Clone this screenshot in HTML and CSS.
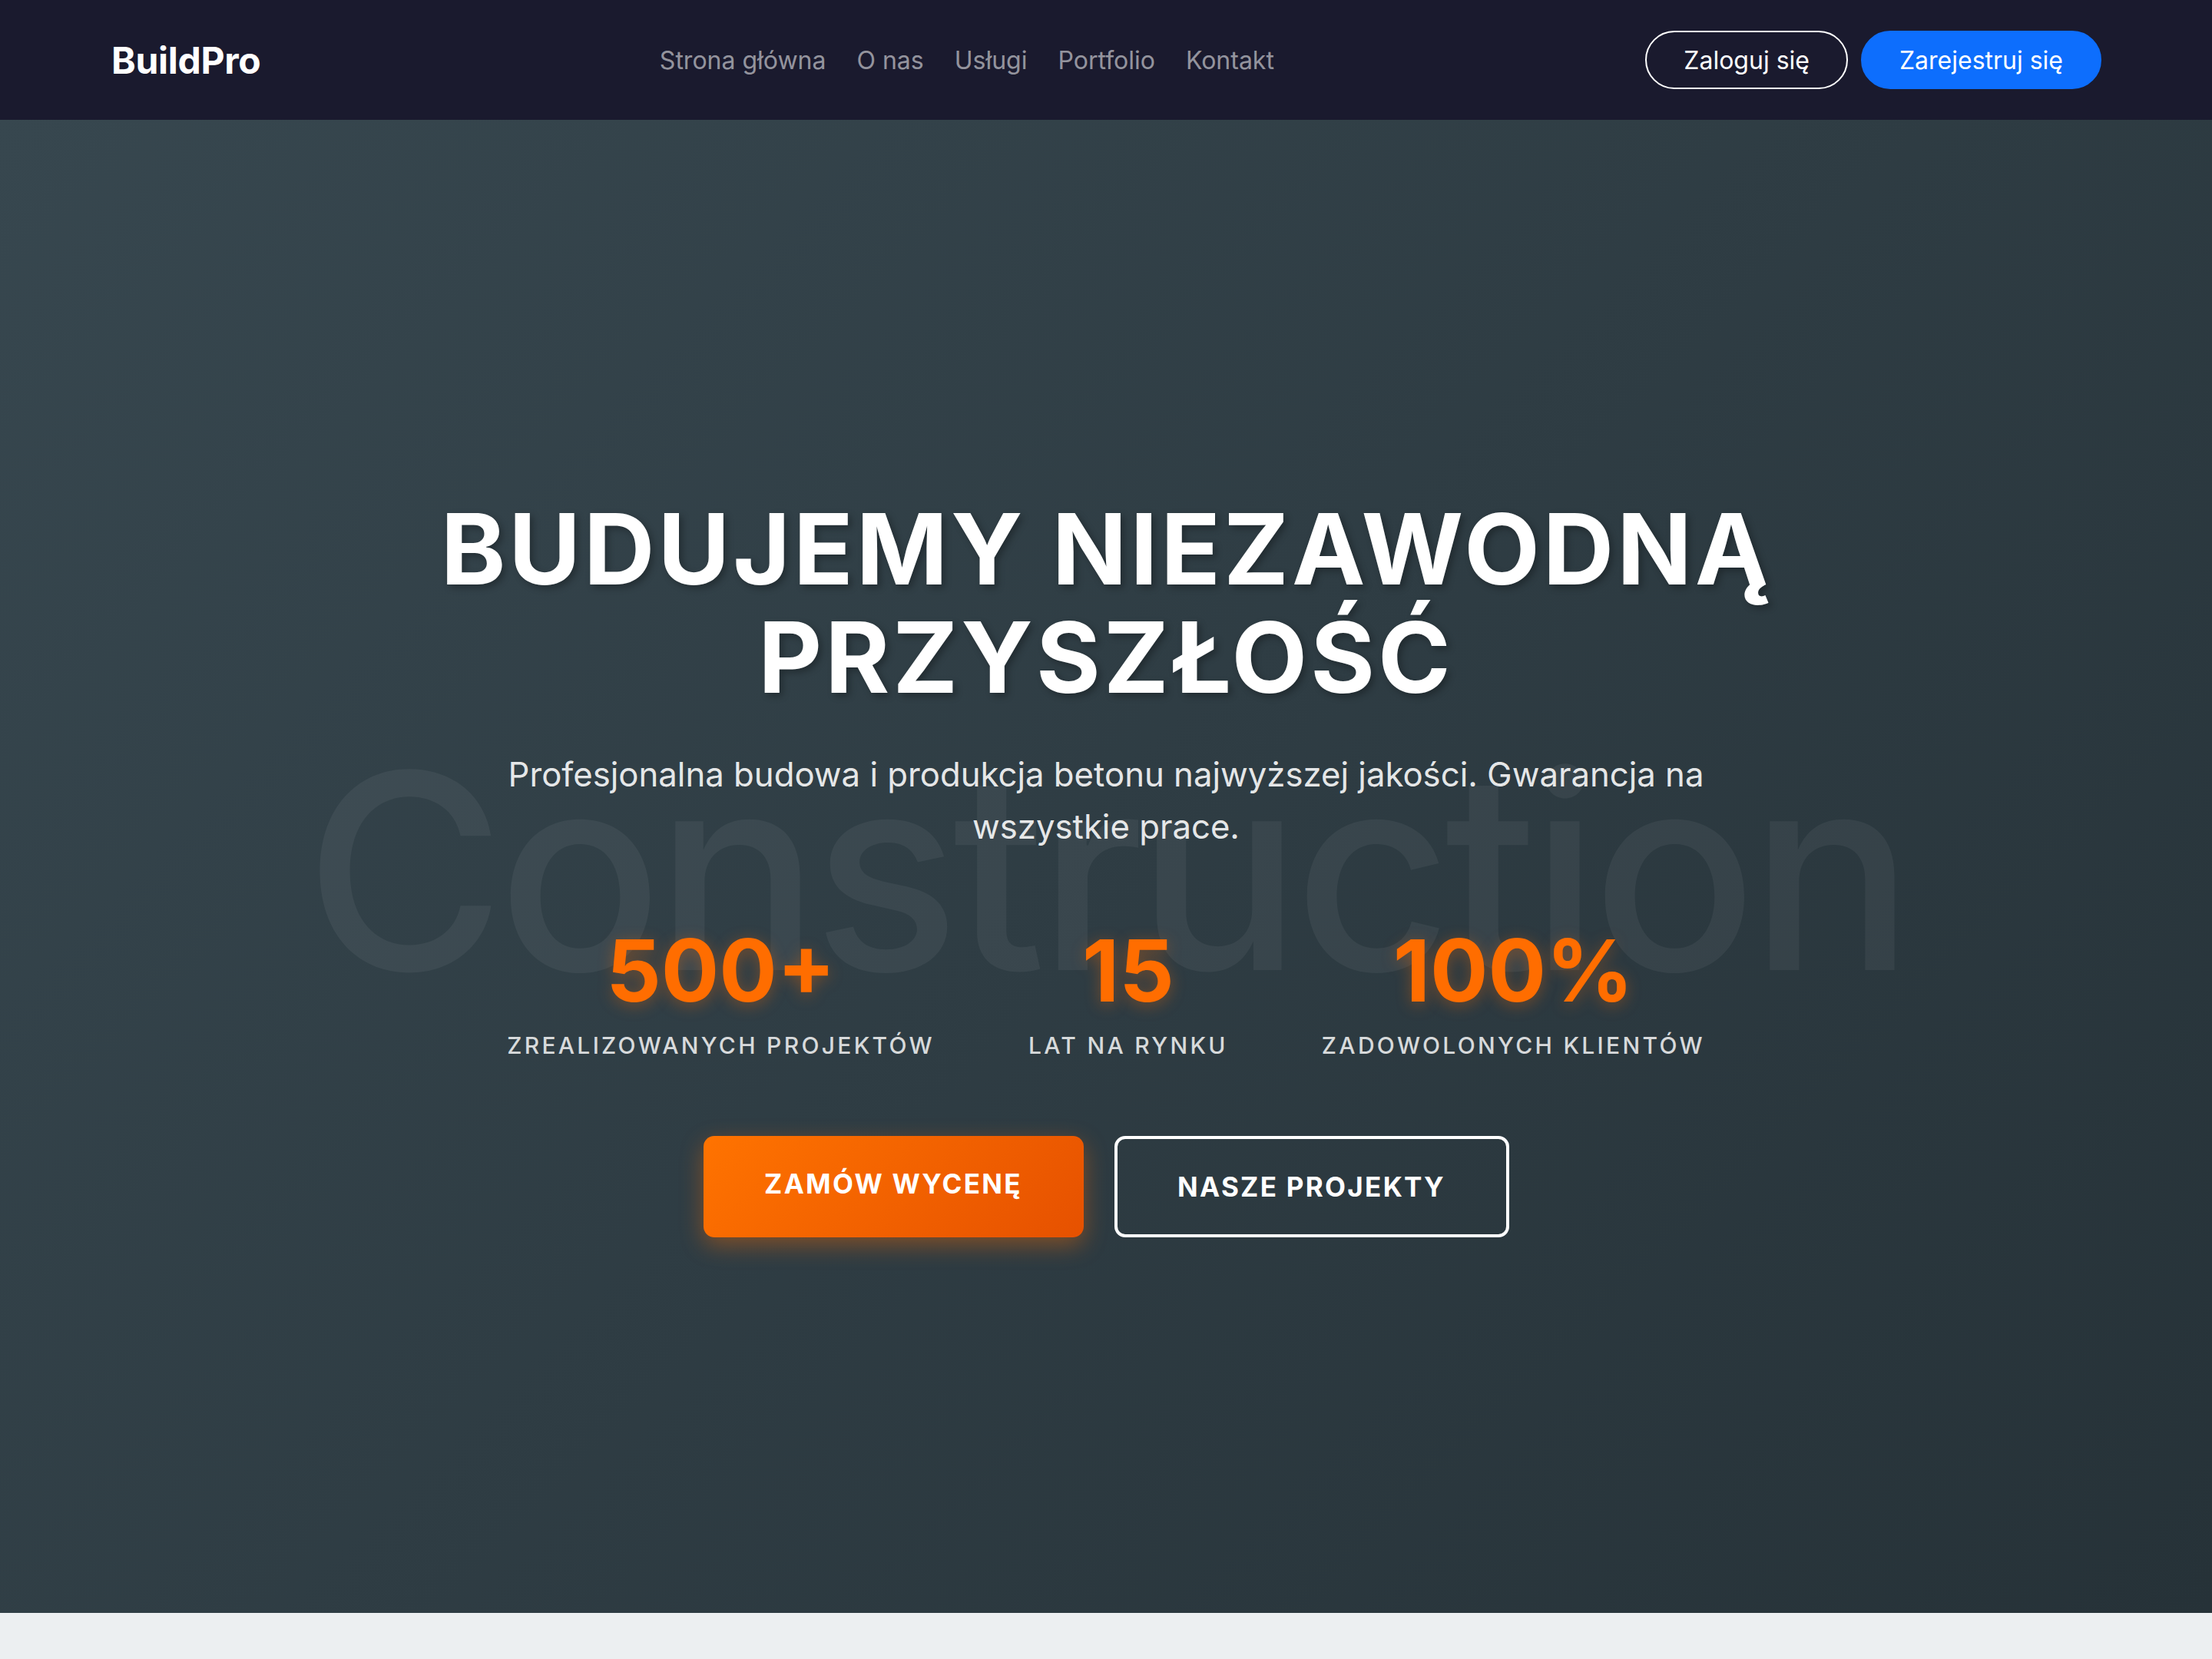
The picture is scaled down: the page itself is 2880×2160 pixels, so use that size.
FILE: index.html
```html
<!DOCTYPE html>
<html lang="pl">
<head>
<meta charset="utf-8">
<title>BuildPro</title>
<link rel="stylesheet" href="styles.css">
</head>
<body>
<nav class="navbar">
  <a class="brand" href="#">BuildPro</a>
  <ul class="nav-links">
    <li><a href="#">Strona główna</a></li>
    <li><a href="#">O nas</a></li>
    <li><a href="#">Usługi</a></li>
    <li><a href="#">Portfolio</a></li>
    <li><a href="#">Kontakt</a></li>
  </ul>
  <div class="auth">
    <a class="btn-pill btn-outline" href="#">Zaloguj się</a>
    <a class="btn-pill btn-primary" href="#">Zarejestruj się</a>
  </div>
</nav>
<section class="hero">
  <div class="watermark" aria-hidden="true">Construction</div>
  <div class="hero-content">
    <h1 class="hero-title">BUDUJEMY NIEZAWODNĄ<br>PRZYSZŁOŚĆ</h1>
    <p class="hero-sub">Profesjonalna budowa i produkcja betonu najwyższej jakości. Gwarancja na wszystkie prace.</p>
    <div class="stats">
      <div class="stat">
        <div class="stat-num">500+</div>
        <div class="stat-label">ZREALIZOWANYCH PROJEKTÓW</div>
      </div>
      <div class="stat">
        <div class="stat-num">15</div>
        <div class="stat-label">LAT NA RYNKU</div>
      </div>
      <div class="stat">
        <div class="stat-num">100%</div>
        <div class="stat-label">ZADOWOLONYCH KLIENTÓW</div>
      </div>
    </div>
    <div class="actions">
      <a class="cta cta-orange" href="#">ZAMÓW WYCENĘ</a>
      <a class="cta cta-ghost" href="#">NASZE PROJEKTY</a>
    </div>
  </div>
</section>
</body>
</html>
```
FILE: styles.css
```css
* { box-sizing: border-box; }
html, body { margin: 0; padding: 0; }
body {
  font-family: Inter, "Noto Sans", "Liberation Sans", sans-serif;
  background: #eceff1;
  color: #fff;
  min-height: 100vh;
}
a { text-decoration: none; color: inherit; }

.navbar {
  height: 156px;
  background: #1a1a2e;
  display: flex;
  align-items: center;
  padding: 0 144px 0 145px;
}
.brand {
  font-size: 48px;
  font-weight: 700;
  color: #fff;
  letter-spacing: -0.3px;
}
.nav-links {
  list-style: none;
  margin: 0;
  padding: 0 0 0 36px;
  flex: 1;
  display: flex;
  justify-content: center;
  gap: 40px;
}
.nav-links a {
  font-size: 32px;
  color: rgba(255,255,255,0.55);
}
.auth { display: flex; gap: 17px; }
.btn-pill {
  height: 76px;
  display: flex;
  align-items: center;
  padding: 0 48px;
  border-radius: 40px;
  font-size: 32px;
  border: 2px solid #fff;
  color: #fff;
}
.btn-primary {
  background: #0d6efd;
  border-color: #0d6efd;
  padding: 0 48px;
}

.hero {
  position: relative;
  min-height: 1944px;
  background: linear-gradient(135deg, #37474f 0%, #263238 100%);
  display: flex;
  align-items: center;
  justify-content: center;
  overflow: hidden;
}
.watermark {
  position: absolute;
  left: 0;
  right: 0;
  top: 801px;
  text-align: center;
  font-size: 355px;
  font-weight: 500;
  line-height: 1;
  color: rgba(255,255,255,0.055);
  letter-spacing: -9px;
  white-space: nowrap;
  pointer-events: none;
}
.hero-content {
  position: relative;
  text-align: center;
  display: flex;
  flex-direction: column;
  align-items: center;
}
.hero-title {
  margin: 0;
  font-size: 128px;
  line-height: 1.1;
  font-weight: 700;
  letter-spacing: 4px;
  text-shadow: 4px 4px 10px rgba(0,0,0,0.3);
}
.hero-sub {
  margin: 48px 0 0;
  max-width: 1600px;
  font-size: 43.7px;
  line-height: 68px;
  color: rgba(255,255,255,0.9);
}
.stats {
  display: flex;
  justify-content: center;
  gap: 122px;
  margin-top: 96px;
}
.stat { display: flex; flex-direction: column; align-items: center; }
.stat-num {
  font-size: 112px;
  line-height: 1;
  font-weight: 700;
  color: #ff6d00;
  text-shadow: 0 4px 20px rgba(255,109,0,0.35);
}
.stat-label {
  margin-top: 24px;
  font-size: 30px;
  font-weight: 500;
  letter-spacing: 3.3px;
  color: rgba(255,255,255,0.82);
}
.actions {
  display: flex;
  gap: 40px;
  margin-top: 100px;
}
.cta {
  height: 132px;
  display: flex;
  align-items: center;
  justify-content: center;
  font-size: 35px;
  font-weight: 700;
  letter-spacing: 2.3px;
  border-radius: 14px;
  color: #fff;
}
.cta-orange {
  width: 495px;
  background: linear-gradient(135deg, #ff7300 0%, #e65100 100%);
  box-shadow: 0 10px 30px rgba(255,109,0,0.4);
  padding-bottom: 8px;
}
.cta-ghost {
  width: 514px;
  border: 4px solid #fff;
}
```
